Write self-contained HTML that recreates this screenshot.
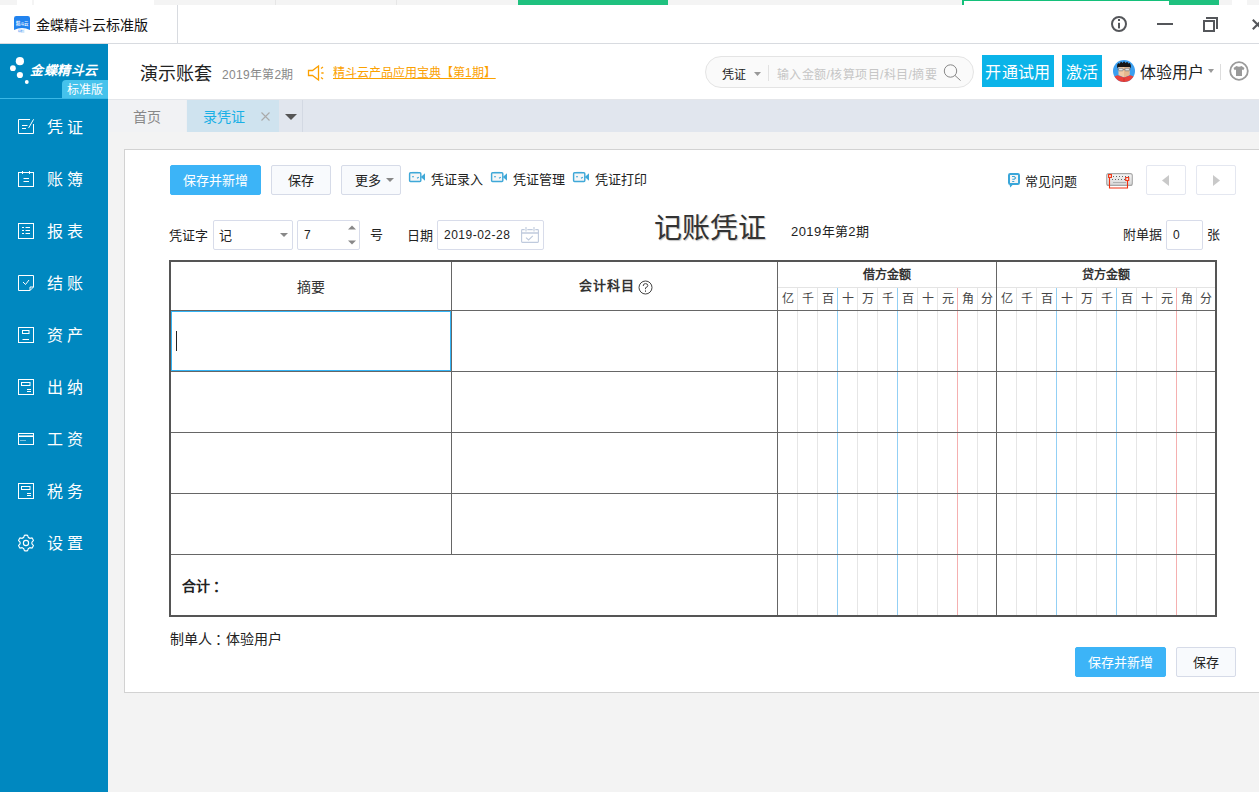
<!DOCTYPE html>
<html lang="zh-CN">
<head>
<meta charset="utf-8">
<title>金蝶精斗云标准版</title>
<style>
*{margin:0;padding:0;box-sizing:border-box;}
html,body{width:1259px;height:792px;overflow:hidden;}
body{position:relative;background:#f3f3f3;font-family:"Liberation Sans",sans-serif;font-size:13px;color:#222;}
.a{position:absolute;}
.t{position:absolute;white-space:nowrap;line-height:22px;height:22px;}
svg{position:absolute;overflow:visible;}
/* top strip */
#strip{left:0;top:0;width:1259px;height:5px;background:#f4f4f4;}
/* title bar */
#titlebar{left:0;top:5px;width:1259px;height:39px;background:#fff;border-bottom:1px solid #d8dbe0;}
/* header */
#header{left:108px;top:44px;width:1151px;height:55px;background:#fff;}
/* sidebar */
#side{left:0;top:44px;width:108px;height:748px;background:#0088c0;}
.mi{position:absolute;left:47px;color:#fff;font-size:16px;letter-spacing:3.5px;line-height:22px;height:22px;white-space:nowrap;}
.ic{left:18px;width:16px;height:16px;fill:none;stroke:#fff;stroke-width:1;}
/* tab bar */
#tabs{left:108px;top:99px;width:1151px;height:33px;background:#e1e6ee;}
/* panel */
#panel{left:124px;top:149px;width:1140px;height:544px;background:#fff;border:1px solid #d2d2d2;}
.btn{position:absolute;height:30px;line-height:30px;text-align:center;border:1px solid #d6dbe8;background:#f8fafd;border-radius:2px;font-size:13px;color:#222;white-space:nowrap;}
.btn.p{background:#3cb4f7;border-color:#3cb4f7;color:#fff;}
.inp{position:absolute;height:30px;border:1px solid #d8dcea;background:#fff;border-radius:2px;}
/* table */
.ln{position:absolute;background:#666;}
.dl{position:absolute;top:288px;width:1px;height:327px;background:#e6e6e6;}
.dl.b{background:#93d0f5;}
.dl.r{background:#f5b0b0;}
.dh{position:absolute;top:289px;width:19px;height:20px;line-height:20px;text-align:center;font-size:12px;color:#444;}
</style>
</head>
<body>

<!-- ===== top strip (background window remnants) ===== -->
<div id="strip" class="a">
  <div class="a" style="left:17px;top:0;width:15px;height:5px;background:#fff"></div>
  <div class="a" style="left:34px;top:0;width:120px;height:5px;background:#fff"></div>
  <div class="a" style="left:275px;top:0;width:1px;height:5px;background:#e6e6e6"></div>
  <div class="a" style="left:396px;top:0;width:1px;height:5px;background:#e6e6e6"></div>
  <div class="a" style="left:518px;top:0;width:150px;height:5px;background:#1fc17f"></div>
  <div class="a" style="left:962px;top:0;width:207px;height:5px;background:#fff;border-top:1px solid #14c07a;border-left:2px solid #14c07a"></div>
  <div class="a" style="left:1169px;top:0;width:50px;height:5px;background:#1fc17f"></div>
  <div class="a" style="left:1232px;top:0;width:15px;height:5px;background:#fff"></div>
</div>

<!-- ===== title bar ===== -->
<div id="titlebar" class="a">
  <div class="a" style="left:177px;top:0;width:1px;height:38px;background:#d8dbe0"></div>
  <svg style="left:14px;top:11px;width:16px;height:16px" viewBox="0 0 16 16">
    <path d="M2.2,0 H13.8 Q16,0 16,2.2 V14 Q8,10 0,14 V2.2 Q0,0 2.2,0 Z" fill="#2283ee"/>
    <g transform="translate(1.6,8.6) scale(0.31)" fill="#e8f2ff" font-family="Liberation Sans, sans-serif" font-weight="bold" font-size="14"><text x="0" y="0">精斗云</text></g>
    <g transform="translate(4.3,15.8) scale(0.17)" fill="#5aa5f3" font-family="Liberation Sans, sans-serif" font-weight="bold" font-size="14"><text x="0" y="0">标准版</text></g>
  </svg>
  <div class="t" style="left:36px;top:9px;font-size:14px;color:#111">金蝶精斗云标准版</div>
  <!-- window controls -->
  <svg style="left:1110px;top:10px;width:18px;height:18px" viewBox="0 0 18 18">
    <circle cx="9" cy="9" r="7" fill="none" stroke="#54565a" stroke-width="2"/>
    <rect x="8" y="4" width="2" height="2" fill="#54565a"/><rect x="8" y="7.8" width="2" height="5.6" fill="#54565a"/>
  </svg>
  <div class="a" style="left:1157px;top:18px;width:16px;height:2px;background:#54565a"></div>
  <svg style="left:1202px;top:11px;width:17px;height:17px" viewBox="0 0 17 17">
    <rect x="2" y="5" width="10" height="10" fill="none" stroke="#54565a" stroke-width="2"/>
    <path d="M4,2 H15 V13" fill="none" stroke="#54565a" stroke-width="2"/>
  </svg>
  <svg style="left:1252px;top:13.6px;width:11px;height:11px" viewBox="0 0 11 11">
    <path d="M0.8,0.8 L10.2,10.2 M10.2,0.8 L0.8,10.2" stroke="#54565a" stroke-width="2.1"/>
  </svg>
</div>

<!-- ===== header ===== -->
<div id="header" class="a">
  <div class="t" style="left:32px;top:19px;font-size:18px;color:#222;line-height:22px;height:22px">演示账套</div>
  <div class="t" style="left:114px;top:20px;font-size:12px;color:#888;letter-spacing:.3px">2019年第2期</div>
  <svg style="left:200px;top:21px;width:17px;height:17px" viewBox="0 0 17 17" fill="none" stroke="#fca000" stroke-width="1.3">
    <path d="M0.5,5.5 H4.5 L10.5,1 V15 L4.5,10.5 H0.5 Z"/>
    <path d="M13,3.5 L15,2 M13.3,8 H15.6 M13,12.5 L15,14"/>
  </svg>
  <div class="t" style="left:225px;top:18px;font-size:12px;color:#fba100;text-decoration:underline;text-underline-offset:1px">精斗云产品应用宝典【第1期】</div>

  <!-- search -->
  <div class="a" style="left:597px;top:12px;width:269px;height:32px;border:1px solid #e4e4e4;border-radius:16px;background:#fafafa"></div>
  <div class="t" style="left:614px;top:20px;font-size:12px;color:#222">凭证</div>
  <svg style="left:646px;top:28px;width:7px;height:4px" viewBox="0 0 7 4"><path d="M0,0 H7 L3.5,4 Z" fill="#999"/></svg>
  <div class="a" style="left:660px;top:21px;width:1px;height:16px;background:#e2e2e2"></div>
  <div class="t" style="left:669px;top:20px;font-size:12px;letter-spacing:.4px;color:#c6c6c6">输入金额/核算项目/科目/摘要</div>
  <svg style="left:835px;top:19px;width:20px;height:20px" viewBox="0 0 20 20" fill="none" stroke="#888" stroke-width="1">
    <circle cx="7.5" cy="8" r="6.2"/><path d="M12,12.5 L17.5,17.5"/>
  </svg>

  <div class="a" style="left:874px;top:11px;width:72px;height:32px;background:#0bb4e9;color:#fff;font-size:16px;line-height:35px;overflow:hidden;letter-spacing:.4px;text-align:center">开通试用</div>
  <div class="a" style="left:954px;top:11px;width:40px;height:32px;background:#0bb4e9;color:#fff;font-size:16px;line-height:35px;overflow:hidden;text-align:center">激活</div>

  <!-- avatar -->
  <svg style="left:1005px;top:16px;width:22px;height:22px" viewBox="0 0 22 22">
    <defs><clipPath id="av"><circle cx="11" cy="11" r="11"/></clipPath></defs>
    <g clip-path="url(#av)">
      <rect width="22" height="22" fill="#3b9ff0"/>
      <path d="M5.5,6 H16.5 V15 L11,17.5 L5.5,15 Z" fill="#f1cba6"/>
      <path d="M11,6 H16.5 V15 L11,17.5 Z" fill="#e6b98f"/>
      <path d="M4,8 L4.2,4.5 L5.6,3 L6.6,3.8 L8,1.6 L9.6,3 L11,1.2 L12.6,3 L14.2,1.8 L15.4,3.6 L16.8,3 L17.8,5 L18,8 L16.5,7 H5.5 Z" fill="#161616"/>
      <rect x="5.6" y="8.3" width="4.4" height="2.5" rx=".6" fill="#e4e6e8" stroke="#666" stroke-width=".6"/>
      <rect x="12" y="8.3" width="4.4" height="2.5" rx=".6" fill="#e4e6e8" stroke="#666" stroke-width=".6"/>
      <path d="M10,9.3 H12 M4,9 H5.6 M16.4,9 H18" stroke="#666" stroke-width=".6"/>
      <path d="M0,22 V17 L4.5,15.2 L11,17.6 L17.5,15.2 L22,17 V22 Z" fill="#e9413b"/>
      <path d="M11,17.6 V22" stroke="#c9302c" stroke-width=".7"/>
    </g>
  </svg>
  <div class="t" style="left:1032px;top:18px;font-size:16px;color:#222;line-height:22px;height:22px">体验用户</div>
  <svg style="left:1100px;top:25px;width:6px;height:4px" viewBox="0 0 6 4"><path d="M0,0 H6 L3,4 Z" fill="#999"/></svg>
  <div class="a" style="left:1112px;top:20px;width:1px;height:16px;background:#ddd"></div>
  <svg style="left:1121px;top:17px;width:20px;height:20px" viewBox="0 0 20 20">
    <circle cx="10" cy="10" r="8.8" fill="none" stroke="#9a9a9a" stroke-width="1.8"/>
    <path d="M7.5,5 Q10,6.5 12.5,5 L15.5,7 L14.3,9.3 L13,8.6 V15 H7 V8.6 L5.7,9.3 L4.5,7 Z" fill="#999"/>
  </svg>
</div>

<!-- ===== tab bar ===== -->
<div id="tabs" class="a">
  <div class="a" style="left:0;top:0;width:1151px;height:1px;background:#e4e6ea"></div>
  <div class="a" style="left:0;top:1px;width:78px;height:32px;background:#f1f2f4"></div>
  <div class="a" style="left:78px;top:1px;width:1px;height:32px;background:#eef0f3"></div>
  <div class="t" style="left:25px;top:7px;font-size:14px;color:#888">首页</div>
  <div class="a" style="left:79px;top:1px;width:92px;height:32px;background:#cfe3ef"></div>
  <div class="t" style="left:95px;top:7px;font-size:14px;color:#19b0e6">录凭证</div>
  <svg style="left:153px;top:13px;width:9px;height:9px" viewBox="0 0 9 9"><path d="M0.5,0.5 L8.5,8.5 M8.5,0.5 L0.5,8.5" stroke="#aaa" stroke-width="1.1"/></svg>
  <div class="a" style="left:171px;top:1px;width:24px;height:32px;border-right:1px solid #d3d9e3"></div>
  <svg style="left:177px;top:15px;width:12px;height:6px" viewBox="0 0 12 6"><path d="M0,0 H12 L6,6 Z" fill="#555"/></svg>
</div>

<!-- ===== sidebar ===== -->
<div id="side" class="a">
  <!-- logo -->
  <svg style="left:0;top:0;width:108px;height:55px" viewBox="0 0 108 55">
    <circle cx="19.9" cy="17.2" r="4.1" fill="#fff"/>
    <circle cx="12.9" cy="24.2" r="2.9" fill="#fff"/>
    <circle cx="19.9" cy="31" r="3.1" fill="#fff"/>
    <circle cx="26.8" cy="38" r="1.9" fill="#fff"/>
    <path d="M62,54 V40 Q62,36 66,36 H108 V54 Z" fill="#45c2ec"/>
    <rect x="0" y="54" width="108" height="1" fill="#3ab8e6"/>
  </svg>
  <div class="t" style="left:30px;top:16px;font-size:13px;font-weight:bold;font-style:italic;color:#fff;letter-spacing:.5px">金蝶精斗云</div>
  <div class="t" style="left:67px;top:35px;font-size:12px;color:#fff">标准版</div>

  <!-- menu items: centres at 127,179,...,543 abs => minus 44 -->
  <svg class="ic" style="top:75px" viewBox="0 0 16 16"><path d="M12,0.5 H0.5 V14.5 H15.5 V5"/><path d="M15.6,0.3 L10.6,9"/><path d="M4,6.5 H9.5 M4,9.5 H8"/></svg>
  <div class="mi" style="top:73px">凭证</div>

  <svg class="ic" style="top:127px" viewBox="0 0 16 16"><rect x="0.5" y="1.5" width="15" height="14"/><path d="M4.5,0 V3 M11.5,0 V3 M5.5,7.5 H11 M5.5,10.5 H11"/></svg>
  <div class="mi" style="top:125px">账簿</div>

  <svg class="ic" style="top:179px" viewBox="0 0 16 16"><rect x="0.5" y="0.5" width="15" height="15"/><path d="M4,4.5 H6 M7.5,4.5 H12 M4,7.5 H6 M7.5,7.5 H12 M4,10.5 H6 M7.5,10.5 H12"/></svg>
  <div class="mi" style="top:177px">报表</div>

  <svg class="ic" style="top:231px" viewBox="0 0 16 16"><path d="M0.5,0.5 H15.5 V12 L12,15.5 H0.5 Z"/><path d="M15.5,12 H12 V15.5"/><path d="M5,7 L7.5,9.5 L11,5"/></svg>
  <div class="mi" style="top:229px">结账</div>

  <svg class="ic" style="top:283px" viewBox="0 0 16 16"><rect x="0.5" y="0.5" width="15" height="15"/><rect x="4.5" y="3.5" width="6.5" height="3"/><path d="M4.5,12.5 H11"/></svg>
  <div class="mi" style="top:281px">资产</div>

  <svg class="ic" style="top:335px" viewBox="0 0 16 16"><rect x="0.5" y="0.5" width="15" height="15"/><rect x="3.5" y="3.5" width="8.5" height="3"/><path d="M9,10.5 H13 M9,12.5 H13"/></svg>
  <div class="mi" style="top:333px">出纳</div>

  <svg class="ic" style="top:389px" viewBox="0 0 16 16"><rect x="0.5" y="0.5" width="15" height="11"/><path d="M0,3.2 H16" stroke-width="1.6"/><path d="M2.5,7.5 H3.5 M4.5,7.5 H5.5 M6.5,7.5 H7.5"/></svg>
  <div class="mi" style="top:385px">工资</div>

  <svg class="ic" style="top:439px" viewBox="0 0 16 16"><rect x="0.5" y="0.5" width="15" height="15"/><rect x="3.5" y="3.5" width="8.5" height="3"/><path d="M9,10.5 H13 M9,12.5 H13"/></svg>
  <div class="mi" style="top:437px">税务</div>

  <svg class="ic" style="top:491px;stroke-width:1.15" viewBox="-8 -8 16 16">
    <path d="M-1.6,-7.6 Q0,-8.2 1.6,-7.6 L2.3,-5.6 Q3.2,-5.2 3.9,-4.6 L6,-5.1 Q7.1,-3.9 7.4,-2.4 L5.9,-0.9 Q6,0 5.9,0.9 L7.4,2.4 Q7.1,3.9 6,5.1 L3.9,4.6 Q3.2,5.2 2.3,5.6 L1.6,7.6 Q0,8.2 -1.6,7.6 L-2.3,5.6 Q-3.2,5.2 -3.9,4.6 L-6,5.1 Q-7.1,3.9 -7.4,2.4 L-5.9,0.9 Q-6,0 -5.9,-0.9 L-7.4,-2.4 Q-7.1,-3.9 -6,-5.1 L-3.9,-4.6 Q-3.2,-5.2 -2.3,-5.6 Z"/>
    <circle cx="0" cy="0" r="2.6"/>
  </svg>
  <div class="mi" style="top:489px">设置</div>
</div>

<!-- ===== main panel ===== -->
<div id="panel" class="a"></div>

<!-- toolbar -->
<div class="btn p" style="left:170px;top:165px;width:91px">保存并新增</div>
<div class="btn" style="left:271px;top:165px;width:60px">保存</div>
<div class="btn" style="left:341px;top:165px;width:60px;text-align:left;padding-left:13px">更多</div>
<svg style="left:386px;top:178px;width:8px;height:4px" viewBox="0 0 8 4"><path d="M0,0 H8 L4,4 Z" fill="#888"/></svg>

<svg style="left:409px;top:172px;width:16px;height:10px" viewBox="0 0 16 10"><rect x="0.6" y="0.8" width="11.2" height="8.7" rx="0.9" fill="#f5f6f7" stroke="#3fa8d8" stroke-width="1.45"/><path d="M3.2,0.4 H9.2" stroke="#3fa8d8" stroke-width="0.8"/><path d="M11.8,5 L16,1.2 V8.8 Z" fill="#3fa8d8"/><path d="M3,4.7 H5 M8,6.3 L9.8,5.2" stroke="#3fa8d8" stroke-width="1.1"/></svg>
<div class="t" style="left:431px;top:169px">凭证录入</div>
<svg style="left:491px;top:172px;width:16px;height:10px" viewBox="0 0 16 10"><rect x="0.6" y="0.8" width="11.2" height="8.7" rx="0.9" fill="#f5f6f7" stroke="#3fa8d8" stroke-width="1.45"/><path d="M3.2,0.4 H9.2" stroke="#3fa8d8" stroke-width="0.8"/><path d="M11.8,5 L16,1.2 V8.8 Z" fill="#3fa8d8"/><path d="M3,4.7 H5 M8,6.3 L9.8,5.2" stroke="#3fa8d8" stroke-width="1.1"/></svg>
<div class="t" style="left:513px;top:169px">凭证管理</div>
<svg style="left:573px;top:172px;width:16px;height:10px" viewBox="0 0 16 10"><rect x="0.6" y="0.8" width="11.2" height="8.7" rx="0.9" fill="#f5f6f7" stroke="#3fa8d8" stroke-width="1.45"/><path d="M3.2,0.4 H9.2" stroke="#3fa8d8" stroke-width="0.8"/><path d="M11.8,5 L16,1.2 V8.8 Z" fill="#3fa8d8"/><path d="M3,4.7 H5 M8,6.3 L9.8,5.2" stroke="#3fa8d8" stroke-width="1.1"/></svg>
<div class="t" style="left:595px;top:169px">凭证打印</div>

<!-- right toolbar -->
<svg style="left:1008px;top:173px;width:12px;height:15px" viewBox="0 0 12 15"><rect x="1" y="1" width="10" height="10" rx="1.2" fill="#f5f5f5" stroke="#3aa6d9" stroke-width="2"/><path d="M1.6,11.8 H4.8 L2.2,14.6 Z" fill="#3aa6d9"/><path d="M4,3.5 H6.3 L7.6,4.9 L6.3,6.3 H4.3 M4.2,8.5 H6.3" fill="none" stroke="#3aa6d9" stroke-width="1.1"/></svg>
<div class="t" style="left:1025px;top:171px">常见问题</div>
<svg style="left:1106px;top:173px;width:27px;height:16px" viewBox="0 0 27 16"><defs><linearGradient id="kbg" x1="0" y1="0" x2="0" y2="1"><stop offset="0" stop-color="#f6f6f6"/><stop offset="1" stop-color="#d6d6d6"/></linearGradient></defs><rect x="0.7" y="0.6" width="25.6" height="11.8" rx="2" fill="url(#kbg)" stroke="#a6a6a6" stroke-width="1.1"/><path d="M4,3.5 H23.5" stroke="#666" stroke-width="1" stroke-dasharray="1 2"/><path d="M6,6.5 H21" stroke="#666" stroke-width="1" stroke-dasharray="1 2"/><path d="M7,9.5 H20" stroke="#b0b0b0" stroke-width="1"/><path d="M3.5,4 V15 H21.5 V7.5" fill="none" stroke="#f03010" stroke-width="1.1"/><rect x="2.6" y="1.6" width="2.8" height="2.8" fill="#fff" stroke="#f03010" stroke-width="1.1"/><rect x="19.7" y="4.6" width="3" height="2.8" fill="#fff" stroke="#f03010" stroke-width="1.1"/></svg>
<div class="btn" style="left:1146px;top:165px;width:40px;background:#fff;border-color:#e4e7f0"></div>
<svg style="left:1162px;top:175px;width:7px;height:11px" viewBox="0 0 7 11"><path d="M7,0 V11 L0,5.5 Z" fill="#c9c9c9"/></svg>
<div class="btn" style="left:1196px;top:165px;width:40px;background:#fff;border-color:#e4e7f0"></div>
<svg style="left:1213px;top:175px;width:7px;height:11px" viewBox="0 0 7 11"><path d="M0,0 V11 L7,5.5 Z" fill="#c9c9c9"/></svg>

<!-- form row -->
<div class="t" style="left:169px;top:225px">凭证字</div>
<div class="inp" style="left:213px;top:220px;width:80px"></div>
<div class="t" style="left:219px;top:225px">记</div>
<svg style="left:280px;top:233px;width:8px;height:4px" viewBox="0 0 8 4"><path d="M0,0 H8 L4,4 Z" fill="#888"/></svg>
<div class="inp" style="left:297px;top:220px;width:63px"></div>
<div class="t" style="left:304px;top:224px;font-size:12px">7</div>
<svg style="left:348px;top:225px;width:8px;height:20px" viewBox="0 0 8 20"><path d="M0,4.5 H8 L4,0.5 Z M0,15.5 H8 L4,19.5 Z" fill="#888"/></svg>
<div class="t" style="left:370px;top:224px">号</div>
<div class="t" style="left:407px;top:225px">日期</div>
<div class="inp" style="left:437px;top:220px;width:107px"></div>
<div class="t" style="left:444px;top:224px;font-size:12px;letter-spacing:.5px">2019-02-28</div>
<svg style="left:521px;top:227px;width:18px;height:16px" viewBox="0 0 18 16" fill="none" stroke="#bfcadd" stroke-width="1.1">
  <rect x="0.6" y="2.6" width="16.8" height="12.8" rx="0.8"/><path d="M0.6,6 H17.4" stroke-width="1.5"/><path d="M5,0 V4.6 M13,0 V4.6" stroke="#fff" stroke-width="2.6"/><path d="M5,0 V4.6 M13,0 V4.6"/><path d="M5,10.6 L7.6,13 L11.8,8.8"/>
</svg>

<div class="t" style="left:654px;top:211px;font-size:28px;line-height:36px;height:36px;color:#333;text-shadow:1px 1px 1px #c4c4c4">记账凭证</div>
<div class="t" style="left:791px;top:221px;letter-spacing:.4px">2019年第2期</div>

<div class="t" style="left:1123px;top:224px">附单据</div>
<div class="inp" style="left:1166px;top:220px;width:37px"></div>
<div class="t" style="left:1173px;top:224px;font-size:12px">0</div>
<div class="t" style="left:1207px;top:224px">张</div>

<!-- ===== voucher table ===== -->
<div class="a" style="left:169px;top:260px;width:1048px;height:357px;border:2px solid #555;background:#fff"></div>
<!-- sub header line -->
<div class="a" style="left:778px;top:287px;width:437px;height:1px;background:#e4e4e4"></div>
<!-- digit lines -->
<div class="dl" style="left:797px"></div><div class="dl" style="left:817px"></div><div class="dl b" style="left:837px"></div>
<div class="dl" style="left:857px"></div><div class="dl" style="left:877px"></div><div class="dl b" style="left:897px"></div>
<div class="dl" style="left:917px"></div><div class="dl" style="left:937px"></div><div class="dl r" style="left:957px"></div>
<div class="dl" style="left:977px"></div>
<div class="dl" style="left:1016px"></div><div class="dl" style="left:1036px"></div><div class="dl b" style="left:1056px"></div>
<div class="dl" style="left:1076px"></div><div class="dl" style="left:1096px"></div><div class="dl b" style="left:1116px"></div>
<div class="dl" style="left:1136px"></div><div class="dl" style="left:1156px"></div><div class="dl r" style="left:1176px"></div>
<div class="dl" style="left:1196px"></div>
<!-- row lines -->
<div class="ln" style="left:171px;top:310px;width:1044px;height:1px"></div>
<div class="ln" style="left:171px;top:371px;width:1044px;height:1px"></div>
<div class="ln" style="left:171px;top:432px;width:1044px;height:1px"></div>
<div class="ln" style="left:171px;top:493px;width:1044px;height:1px"></div>
<div class="ln" style="left:171px;top:554px;width:1044px;height:1px"></div>
<!-- column lines -->
<div class="ln" style="left:451px;top:262px;width:1px;height:293px"></div>
<div class="ln" style="left:777px;top:262px;width:1px;height:353px"></div>
<div class="ln" style="left:996px;top:262px;width:1px;height:353px"></div>
<!-- focus -->
<div class="a" style="left:171px;top:311px;width:280px;height:60px;border:1px solid #33b4f5"></div>
<div class="a" style="left:176px;top:331px;width:1px;height:20px;background:#222"></div>

<!-- header texts -->
<div class="t" style="left:171px;top:276px;width:280px;text-align:center;font-size:14px;color:#333">摘要</div>
<div class="t" style="left:579px;top:275px;font-size:13px;letter-spacing:1px;font-weight:bold;color:#333">会计科目</div>
<svg style="left:637.5px;top:279.5px;width:15px;height:15px" viewBox="0 0 15 15" fill="none" stroke="#444" stroke-width="1"><circle cx="7.5" cy="7.5" r="6.5"/><path d="M5.2,6 Q5.2,3.6 7.5,3.6 Q9.8,3.6 9.8,5.6 Q9.8,7 7.5,7.8 V9.2 M7.5,10.4 V11.8"/></svg>
<div class="t" style="left:778px;top:264px;width:218px;text-align:center;font-size:12px;font-weight:bold;color:#333">借方金额</div>
<div class="t" style="left:997px;top:264px;width:218px;text-align:center;font-size:12px;font-weight:bold;color:#333">贷方金额</div>

<div class="dh" style="left:778px">亿</div><div class="dh" style="left:798px">千</div><div class="dh" style="left:818px">百</div><div class="dh" style="left:838px">十</div><div class="dh" style="left:858px">万</div><div class="dh" style="left:878px">千</div><div class="dh" style="left:898px">百</div><div class="dh" style="left:918px">十</div><div class="dh" style="left:938px">元</div><div class="dh" style="left:958px">角</div><div class="dh" style="left:977px">分</div>
<div class="dh" style="left:997px">亿</div><div class="dh" style="left:1017px">千</div><div class="dh" style="left:1037px">百</div><div class="dh" style="left:1057px">十</div><div class="dh" style="left:1077px">万</div><div class="dh" style="left:1097px">千</div><div class="dh" style="left:1117px">百</div><div class="dh" style="left:1137px">十</div><div class="dh" style="left:1157px">元</div><div class="dh" style="left:1177px">角</div><div class="dh" style="left:1196px">分</div>

<div class="t" style="left:182px;top:575px;font-size:14px;font-weight:bold;color:#222">合计<span style="position:relative;left:3px">：</span></div>
<div class="t" style="left:170px;top:628px;font-size:14px;color:#222">制单人<span style="position:relative;left:3px">：</span>体验用户</div>

<!-- bottom buttons -->
<div class="btn p" style="left:1075px;top:647px;width:91px">保存并新增</div>
<div class="btn" style="left:1176px;top:647px;width:60px">保存</div>

</body>
</html>
